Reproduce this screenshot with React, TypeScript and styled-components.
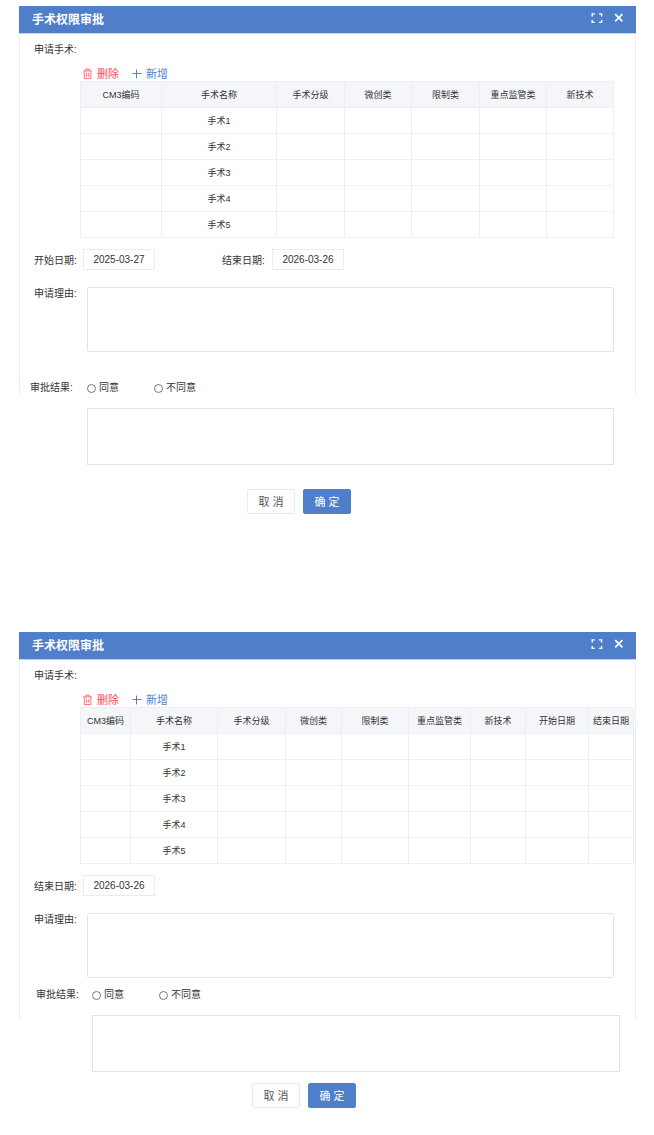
import React, { useId, useState } from "react";
import styled, { createGlobalStyle } from "styled-components";

const GlobalStyle = createGlobalStyle`
  *, *::before, *::after { box-sizing: border-box; }
  body {
    margin: 0;
    background: #fff;
    color: #333;
    font: 10px/14px "Liberation Sans", "Noto Sans CJK SC", sans-serif;
  }
  button, input, textarea { font: inherit; color: inherit; }
`;

const Page = styled.main`
  display: flex;
  flex-direction: column;
  gap: 118px;
  padding: 6px 18px 24px 19px;
`;

const Dialog = styled.section`
  display: flex;
  flex-direction: column;
`;

const Header = styled.header`
  display: flex;
  align-items: center;
  height: 28px;
  padding: 1px 11px 0 13px;
  background: #4f7ecb;
  border-bottom: 1px solid #c3d0f0;
  color: #fff;
`;

const Title = styled.h2`
  flex: 1;
  margin: 0;
  font-size: 12px;
  line-height: 16px;
  font-weight: 700;
`;

const HeaderActions = styled.div`
  display: flex;
  gap: 10px;
  padding-bottom: 4px;
`;

const IconButton = styled.button`
  display: flex;
  padding: 0;
  border: 0;
  background: none;
  cursor: pointer;
`;

const Body = styled.div<{ $bottom: number }>`
  padding: 9px 0 ${(p) => p.$bottom}px 14px;
  border: solid #efeff2;
  border-width: 0 1px;
`;

const Row = styled.div<{ $top?: number; $right?: number }>`
  display: flex;
  align-items: flex-start;
  margin-top: ${(p) => p.$top ?? 0}px;
  padding-right: ${(p) => p.$right ?? 0}px;
`;

const DateRow = styled(Row)`
  align-items: center;
`;

const Label = styled.label<{ $width: number }>`
  flex: none;
  width: ${(p) => p.$width}px;
`;

const DateLabel = styled(Label)`
  padding-top: 2px;
`;

const TableArea = styled.div<{ $right: number }>`
  margin: 10px ${(p) => p.$right}px 0 46px;
`;

const Tools = styled.div`
  display: flex;
  gap: 13px;
  padding-left: 3px;
`;

const ToolButton = styled.button<{ $color: string }>`
  display: flex;
  align-items: center;
  gap: 4px;
  height: 14px;
  padding: 0;
  border: 0;
  background: none;
  color: ${(p) => p.$color};
  font-size: 11px;
  line-height: 14px;
  cursor: pointer;
`;

const Table = styled.table`
  width: 100%;
  table-layout: fixed;
  border-collapse: collapse;
  font-size: 9px;
  line-height: 12px;
  text-align: center;
`;

const Column = styled.col<{ $width: number }>`
  width: ${(p) => p.$width}px;
`;

const HeadCell = styled.th`
  height: 26px;
  padding: 0;
  border: 1px solid #eeeff2;
  background: #f5f6fa;
  font-weight: 400;
  white-space: nowrap;
`;

const Cell = styled.td`
  height: 26px;
  padding: 0;
  border: 1px solid #eeeff1;
`;

const DateInput = styled.input`
  width: 72px;
  height: 21px;
  padding: 0;
  border: 1px solid #ececec;
  background: #fff;
  text-align: center;
`;

const EndDate = styled.div`
  display: flex;
  align-items: center;
  margin-left: 67px;
`;

const TextArea = styled.textarea<{ $height: number; $radius?: number }>`
  display: block;
  flex: 1;
  min-width: 0;
  height: ${(p) => p.$height}px;
  padding: 4px;
  border: 1px solid #e4e4e4;
  border-radius: ${(p) => p.$radius ?? 0}px;
  background: #fff;
  resize: none;
`;

const ResultRow = styled.fieldset<{ $top: number; $shift: number }>`
  display: flex;
  min-width: 0;
  margin: ${(p) => p.$top}px 0 0 ${(p) => p.$shift}px;
  padding: 0;
  border: 0;
`;

const ResultLabel = styled.span<{ $width: number }>`
  flex: none;
  width: ${(p) => p.$width}px;
`;

const Option = styled.label`
  display: flex;
  align-items: center;
  gap: 3px;
  margin-right: 35px;
`;

const Radio = styled.input`
  appearance: none;
  width: 9px;
  height: 9px;
  margin: 0;
  border: 1px solid #777;
  border-radius: 50%;
  background: #fff;
  &:checked {
    background: radial-gradient(circle, #4f7ecb 2px, #fff 3px);
  }
`;

const Opinion = styled.div<{ $top: number; $left: number; $right: number }>`
  display: flex;
  margin: ${(p) => p.$top}px ${(p) => p.$right}px 0 ${(p) => p.$left}px;
`;

const Footer = styled.footer<{ $top: number; $left: number }>`
  display: flex;
  gap: 8px;
  margin: ${(p) => p.$top}px 0 0 ${(p) => p.$left}px;
`;

const Button = styled.button<{ $primary?: boolean }>`
  width: 48px;
  height: 25px;
  padding: 0;
  border: 1px solid ${(p) => (p.$primary ? "#4f7ecb" : "#ebebeb")};
  border-radius: 2px;
  background: ${(p) => (p.$primary ? "#4f7ecb" : "#fff")};
  color: ${(p) => (p.$primary ? "#fff" : "#555")};
  font-size: 11px;
  line-height: 16px;
  white-space: pre;
  cursor: pointer;
`;

const ExpandIcon = () => (
  <svg width="12" height="12" viewBox="0 0 12 12" fill="none" stroke="currentColor" strokeWidth="1.4">
    <path d="M1.2 4.4V1.9H3.8M8 1.9h2.6V4.4M10.6 7.9v2.5H8M3.8 10.4H1.2V7.9" />
  </svg>
);

const CloseIcon = () => (
  <svg width="12" height="12" viewBox="0 0 12 12" fill="none" stroke="currentColor" strokeWidth="1.7">
    <path d="M2.2 2.2l7.2 7.2M9.4 2.2L2.2 9.4" />
  </svg>
);

const TrashIcon = () => (
  <svg width="10" height="12" viewBox="0 0 10 12" fill="none" stroke="currentColor" strokeWidth="0.8">
    <path d="M0.3 2.9h8.6M2.9 2.8V1h3.4v1.8M1.3 3.2v7.4h6.6V3.2M3.6 4.8v4M5.7 4.8v4" />
  </svg>
);

const PlusIcon = () => (
  <svg width="10" height="10" viewBox="0 0 10 10" fill="none" stroke="currentColor">
    <path d="M0.5 4.5h9M4.5 0.5v9" />
  </svg>
);

type ColumnSpec = [title: string, width: number];

const baseColumns: ColumnSpec[] = [
  ["CM3编码", 81],
  ["手术名称", 115],
  ["手术分级", 68],
  ["微创类", 67],
  ["限制类", 68],
  ["重点监管类", 67],
  ["新技术", 67],
];

const datedColumns: ColumnSpec[] = [
  ["CM3编码", 50],
  ["手术名称", 87],
  ["手术分级", 68],
  ["微创类", 56],
  ["限制类", 67],
  ["重点监管类", 62],
  ["新技术", 55],
  ["开始日期", 63],
  ["结束日期", 45],
];

const operations = ["手术1", "手术2", "手术3", "手术4", "手术5"];

function OperationTable({ columns }: { columns: ColumnSpec[] }) {
  return (
    <Table>
      <colgroup>
        {columns.map(([title, width]) => (
          <Column key={title} $width={width} />
        ))}
      </colgroup>
      <thead>
        <tr>
          {columns.map(([title]) => (
            <HeadCell key={title} scope="col">{title}</HeadCell>
          ))}
        </tr>
      </thead>
      <tbody>
        {operations.map((name) => (
          <tr key={name}>
            {columns.map(([title], i) => (
              <Cell key={title}>{i === 1 ? name : null}</Cell>
            ))}
          </tr>
        ))}
      </tbody>
    </Table>
  );
}

function DateField({ label, initial, labelWidth }: { label: string; initial: string; labelWidth: number }) {
  const id = useId();
  const [value, setValue] = useState(initial);
  return (
    <>
      <DateLabel htmlFor={id} $width={labelWidth}>{label}</DateLabel>
      <DateInput id={id} value={value} onChange={(e) => setValue(e.target.value)} />
    </>
  );
}

function ApprovalDialog({ dated = false }: { dated?: boolean }) {
  const id = useId();
  return (
    <Dialog aria-labelledby={`${id}-title`}>
      <Header>
        <Title id={`${id}-title`}>手术权限审批</Title>
        <HeaderActions>
          <IconButton type="button" aria-label="全屏"><ExpandIcon /></IconButton>
          <IconButton type="button" aria-label="关闭"><CloseIcon /></IconButton>
        </HeaderActions>
      </Header>
      <Body $bottom={dated ? 18 : 0}>
        <Row>
          <span>申请手术:</span>
        </Row>
        <TableArea $right={dated ? 2 : 22}>
          <Tools>
            <ToolButton type="button" $color="#fa4b55"><TrashIcon />删除</ToolButton>
            <ToolButton type="button" $color="#4f7ed2"><PlusIcon />新增</ToolButton>
          </Tools>
          <OperationTable columns={dated ? datedColumns : baseColumns} />
        </TableArea>
        <DateRow $top={11}>
          {dated ? (
            <DateField label="结束日期:" initial="2026-03-26" labelWidth={49} />
          ) : (
            <>
              <DateField label="开始日期:" initial="2025-03-27" labelWidth={49} />
              <EndDate>
                <DateField label="结束日期:" initial="2026-03-26" labelWidth={50} />
              </EndDate>
            </>
          )}
        </DateRow>
        <Row $top={17} $right={21}>
          <Label htmlFor={`${id}-reason`} $width={53}>申请理由:</Label>
          <TextArea id={`${id}-reason`} $height={65} $radius={2} />
        </Row>
        <ResultRow $top={dated ? 10 : 29} $shift={dated ? 2 : -4} aria-labelledby={`${id}-result`}>
          <ResultLabel id={`${id}-result`} $width={dated ? 56 : 57}>审批结果:</ResultLabel>
          <Option><Radio type="radio" name={`${id}-r`} />同意</Option>
          <Option><Radio type="radio" name={`${id}-r`} />不同意</Option>
        </ResultRow>
      </Body>
      <Opinion $top={dated ? -5 : 13} $left={dated ? 73 : 68} $right={dated ? 16 : 22}>
        <TextArea aria-labelledby={`${id}-result`} $height={57} />
      </Opinion>
      <Footer $top={dated ? 11 : 24} $left={dated ? 233 : 228}>
        <Button type="button">取 消</Button>
        <Button type="button" $primary>确 定</Button>
      </Footer>
    </Dialog>
  );
}

export default function App() {
  return (
    <>
      <GlobalStyle />
      <Page>
        <ApprovalDialog />
        <ApprovalDialog dated />
      </Page>
    </>
  );
}
